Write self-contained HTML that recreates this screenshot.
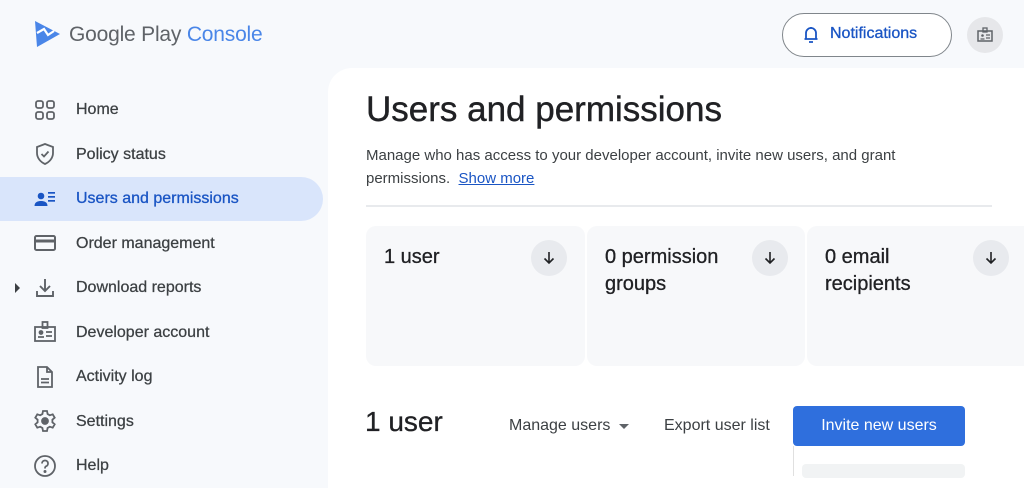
<!DOCTYPE html>
<html><head><style>
*{margin:0;padding:0;box-sizing:border-box}
body{width:1024px;height:476px;overflow:hidden;background:#f7f9fc;font-family:"Liberation Sans",Arial,sans-serif;position:relative;color:#202124}
.abs{position:absolute}
.nav{position:absolute;left:76px;font-size:16px;color:#3c4043;-webkit-text-stroke:0.25px #3c4043}
.ic{position:absolute;left:33px;width:24px;height:24px}
.card{position:absolute;top:226px;height:140px;background:#f7f8fa;border-radius:10px}
.ct{position:absolute;left:18px;top:18px;font-size:20px;line-height:27px;color:#202124;-webkit-text-stroke:0.3px #202124}
.cb{position:absolute;top:14px;width:36px;height:36px;border-radius:50%;background:#e8eaee;display:flex;align-items:center;justify-content:center}
</style></head><body>
<svg class="abs" style="left:34px;top:20px" width="28" height="28" viewBox="0 0 28 28"><path d="M1 1 L26 14 L3 27 Z" fill="#4a86e8"/><path d="M3 13 L10 9 L14 15 L20 11" stroke="#fff" stroke-width="2.2" fill="none"/></svg>
<div class="abs" style="left:69px;top:23px;font-size:21px;color:#5f6368;letter-spacing:-0.2px">Google Play <span style="color:#4a86e8">Console</span></div>
<div class="abs" style="left:782px;top:13px;width:170px;height:44px;border:1px solid #80868b;border-radius:22px;background:#fff"></div>
<svg class="abs" style="left:802px;top:25px" width="18" height="20" viewBox="0 0 18 20"><path d="M4 14 V8 a5 5 0 0 1 10 0 V14 H15.5 M2.5 14 H15.5 M7 17 H11 M9 2 v1" stroke="#1a55c4" stroke-width="1.8" fill="none"/></svg>
<div class="abs" style="left:830px;top:25px;font-size:16px;color:#1a55c4;-webkit-text-stroke:0.3px #1a55c4">Notifications</div>
<div class="abs" style="left:967px;top:17px;width:36px;height:36px;border-radius:50%;background:#e6e7ea"></div>
<svg class="abs" style="left:976px;top:26px" width="18" height="18" viewBox="0 0 18 18"><rect x="2" y="5" width="14" height="10" fill="none" stroke="#5f6368" stroke-width="1.5"/><rect x="7" y="2" width="4" height="4" fill="none" stroke="#5f6368" stroke-width="1.3"/><circle cx="6.5" cy="9.5" r="1.3" fill="#5f6368"/><path d="M10 9h4M10 12h4M4.5 13h4" stroke="#5f6368" stroke-width="1.2"/></svg>
<div class="abs" style="left:0;top:177px;width:323px;height:44px;background:#d9e5fb;border-radius:0 22px 22px 0"></div>
<svg class="ic" style="top:98px" viewBox="0 0 24 24" fill="none" stroke="#5f6368" stroke-width="1.8"><rect x="3" y="3" width="7" height="7" rx="2"/><rect x="14" y="3" width="7" height="7" rx="2"/><rect x="3" y="14" width="7" height="7" rx="2"/><rect x="14" y="14" width="7" height="7" rx="2"/></svg>
<div class="nav" style="top:101px">Home</div>
<svg class="ic" style="top:142px" viewBox="0 0 24 24" fill="none" stroke="#5f6368" stroke-width="1.8"><path d="M12 2 L20 5 V11 C20 16 16.5 20 12 22 C7.5 20 4 16 4 11 V5 Z"/><path d="M8.5 12 L11 14.5 L15.5 9.5"/></svg>
<div class="nav" style="top:146px">Policy status</div>
<svg class="ic" style="top:187px" viewBox="0 0 24 24" fill="#1a55c4"><circle cx="8" cy="9" r="3.3"/><path d="M1.5 19 C1.5 15 5 14 8 14 C11 14 14.5 15 14.5 19 Z"/><rect x="15" y="5" width="7" height="1.7"/><rect x="15" y="9" width="7" height="1.7"/><rect x="15" y="13" width="7" height="1.7"/></svg>
<div class="nav" style="top:190px;color:#1a55c4;-webkit-text-stroke:0.3px #1a55c4">Users and permissions</div>
<svg class="ic" style="top:231px" viewBox="0 0 24 24" fill="none" stroke="#5f6368" stroke-width="2"><rect x="2" y="5" width="20" height="14" rx="1.5"/><path d="M2 10h20" stroke-width="3"/></svg>
<div class="nav" style="top:235px">Order management</div>
<div class="abs" style="left:15px;top:283px;width:0;height:0;border-top:5px solid transparent;border-bottom:5px solid transparent;border-left:5px solid #3c4043"></div>
<svg class="ic" style="top:276px" viewBox="0 0 24 24" fill="none" stroke="#5f6368" stroke-width="1.9"><path d="M12 3 V15 M7 10 L12 15 L17 10 M4 15 V20 H20 V15"/></svg>
<div class="nav" style="top:279px">Download reports</div>
<svg class="ic" style="top:320px" viewBox="0 0 24 24" fill="none" stroke="#5f6368" stroke-width="1.8"><rect x="2" y="7" width="20" height="14"/><rect x="9.5" y="2" width="5" height="6"/><circle cx="8" cy="12.5" r="1.5" fill="#5f6368"/><path d="M13 12h6M13 16h6M5 17h6"/></svg>
<div class="nav" style="top:324px">Developer account</div>
<svg class="ic" style="top:365px" viewBox="0 0 24 24" fill="none" stroke="#5f6368" stroke-width="1.8"><path d="M5 2 H14 L19 7 V22 H5 Z M14 2 V7 H19"/><path d="M8 14h8M8 17.5h8"/></svg>
<div class="nav" style="top:368px">Activity log</div>
<svg class="ic" style="top:409px" viewBox="0 0 24 24" fill="none" stroke="#5f6368" stroke-width="1.8"><path d="M10 2h4l.6 3 2.2 1.3 2.9-1 2 3.4-2.3 2 v2.6l2.3 2-2 3.4-2.9-1L14.6 19 14 22h-4l-.6-3-2.2-1.3-2.9 1-2-3.4 2.3-2V10.7l-2.3-2 2-3.4 2.9 1L9.4 5z"/><circle cx="12" cy="12" r="3" fill="#5f6368"/></svg>
<div class="nav" style="top:413px">Settings</div>
<svg class="ic" style="top:454px" viewBox="0 0 24 24" fill="none" stroke="#5f6368" stroke-width="1.8"><circle cx="12" cy="12" r="10"/><path d="M9 9.5a3 3 0 1 1 4 2.8c-1 .4-1 1.2-1 2.2"/><circle cx="12" cy="17.5" r=".6" fill="#5f6368"/></svg>
<div class="nav" style="top:457px">Help</div>
<div class="abs" style="left:328px;top:68px;width:700px;height:420px;background:#fff;border-radius:24px 0 0 0"></div>
<div class="abs" style="left:366px;top:90px;font-size:35px;color:#202124;-webkit-text-stroke:0.4px #202124">Users and permissions</div>
<div class="abs" style="left:366px;top:144px;width:620px;font-size:15px;line-height:23px;color:#3c4043">Manage who has access to your developer account, invite new users, and grant permissions.&nbsp; <span style="color:#1a55c4;text-decoration:underline">Show more</span></div>
<div class="abs" style="left:366px;top:205px;width:626px;height:2px;background:#e8eaed"></div>
<div class="card" style="left:366px;width:219px"><div class="ct">1 user</div><div class="cb" style="left:165px"><svg width="14" height="14" viewBox="0 0 14 14"><path d="M7 1V12M2.5 7.5L7 12l4.5-4.5" stroke="#202124" stroke-width="1.6" fill="none"/></svg></div></div>
<div class="card" style="left:587px;width:218px"><div class="ct">0 permission<br>groups</div><div class="cb" style="left:165px"><svg width="14" height="14" viewBox="0 0 14 14"><path d="M7 1V12M2.5 7.5L7 12l4.5-4.5" stroke="#202124" stroke-width="1.6" fill="none"/></svg></div></div>
<div class="card" style="left:807px;width:230px"><div class="ct">0 email<br>recipients</div><div class="cb" style="left:166px"><svg width="14" height="14" viewBox="0 0 14 14"><path d="M7 1V12M2.5 7.5L7 12l4.5-4.5" stroke="#202124" stroke-width="1.6" fill="none"/></svg></div></div>
<div class="abs" style="left:365px;top:406px;font-size:28px;color:#202124;-webkit-text-stroke:0.3px #202124">1 user</div>
<div class="abs" style="left:509px;top:417px;font-size:16px;color:#3c4043">Manage users</div>
<div class="abs" style="left:619px;top:424px;width:0;height:0;border-left:5px solid transparent;border-right:5px solid transparent;border-top:5px solid #5f6368"></div>
<div class="abs" style="left:664px;top:417px;font-size:16px;color:#3c4043">Export user list</div>
<div class="abs" style="left:793px;top:406px;width:172px;height:40px;background:#2f6fdd;border-radius:4px;color:#fff;font-size:16px;text-align:center;line-height:40px">Invite new users</div>
<div class="abs" style="left:793px;top:446px;width:1px;height:30px;background:#e0e0e0"></div>
<div class="abs" style="left:802px;top:464px;width:163px;height:14px;background:#f1f3f4;border-radius:4px"></div>
</body></html>
